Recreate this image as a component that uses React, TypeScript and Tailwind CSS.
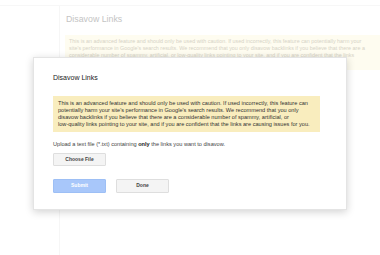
import React from "react";

export default function App() {
  return (
    <div className="relative w-[380px] h-[255px] overflow-hidden bg-white" style={{ fontFamily: '"Liberation Sans", Arial, sans-serif' }}>
      {/* faded background page */}
      <div className="mt-[5px] h-[250px] border-t border-[#f7f7f7] flex">
        <div className="w-[60px] shrink-0 border-r border-[#f6f6f6]" />
        <div className="flex-1 pl-[5px] pt-[8px]">
          <div className="pl-[1px] text-[8.8px] leading-[11px] text-[#c4c4c4]">Disavow Links</div>
          <div className="mt-[10px] bg-[#fefcf0] pl-[4px] pt-[3px] pb-[4px] text-[5.4px] leading-[7px] text-[#d6d3c6] whitespace-nowrap">
            This is an advanced feature and should only be used with caution. If used incorrectly, this feature can potentially harm your
            <br />
            site's performance in Google's search results. We recommend that you only disavow backlinks if you believe that there are a
            <br />
            considerable number of spammy, artificial, or low-quality links pointing to your site, and if you are confident that the links
            <br />
            are causing issues for you.
          </div>
        </div>
      </div>

      {/* dialog */}
      <div className="absolute left-[33px] top-[57px] w-[314px] h-[153px] bg-white shadow-[0_2px_8px_rgba(0,0,0,0.18)] border border-[#e4e4e4] pl-[19px] pt-[15px]">
        <div className="text-[7px] leading-[9px] text-[#222]">Disavow Links</div>
        <div className="mt-[14px] w-[267px] h-[36px] bg-[#f9edbe] pl-[5px] pt-[4px] text-[5.6px] leading-[7px] text-[#333] whitespace-nowrap">
          This is an advanced feature and should only be used with caution. If used incorrectly, this feature can
          <br />
          potentially harm your site's performance in Google's search results. We recommend that you only
          <br />
          disavow backlinks if you believe that there are a considerable number of spammy, artificial, or
          <br />
          low-quality links pointing to your site, and if you are confident that the links are causing issues for you.
        </div>
        <div className="mt-[9px] text-[5.6px] leading-[7px] text-[#444] whitespace-nowrap">
          Upload a text file (*.txt) containing <b className="text-[#222]">only</b> the links you want to disavow.
        </div>
        <div className="mt-[5px] flex">
          <div className="w-[53px] h-[13px] flex items-center justify-center bg-[#f4f4f4] border border-[#dedede] rounded-[1px] text-[5px] text-[#444] font-bold">
            Choose File
          </div>
        </div>
        <div className="mt-[13px] flex gap-[10px]">
          <div className="w-[53px] h-[14px] flex items-center justify-center bg-[#a8c7fa] border border-[#9dbff5] rounded-[1px] text-[5px] text-white font-bold">
            Submit
          </div>
          <div className="w-[53px] h-[14px] flex items-center justify-center bg-[#f4f4f4] border border-[#dedede] rounded-[1px] text-[5px] text-[#444] font-bold">
            Done
          </div>
        </div>
      </div>
    </div>
  );
}
